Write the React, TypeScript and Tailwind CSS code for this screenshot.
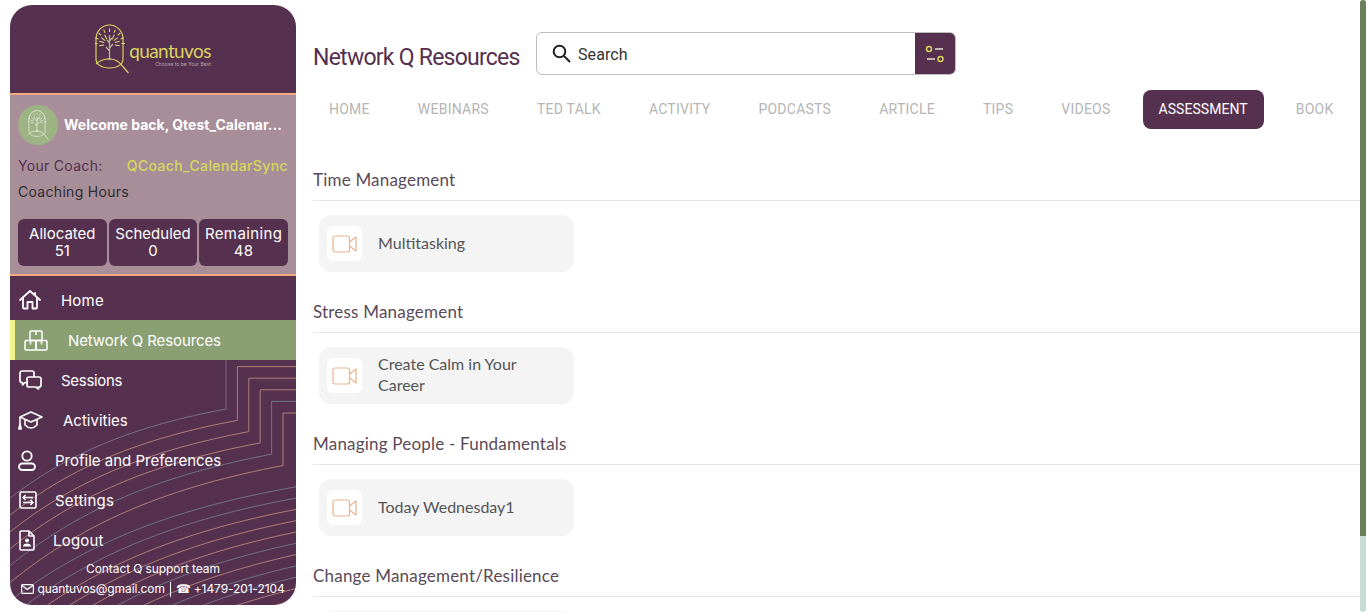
const tabs = ["HOME", "WEBINARS", "TED TALK", "ACTIVITY", "PODCASTS", "ARTICLE", "TIPS", "VIDEOS", "ASSESSMENT", "BOOK"];

const sections = [
  { title: "Time Management", item: "Multitasking" },
  { title: "Stress Management", item: "Create Calm in Your Career" },
  { title: "Managing People - Fundamentals", item: "Today Wednesday1" },
  { title: "Change Management/Resilience", item: "" },
];

function TreeLogo({ className, color, ray, trunk }: { className: string; color: string; ray: string; trunk: string }) {
  const inner = [-75, -52, -28, 28, 52, 75, -100, 100];
  const outer = [-88, -66, -44, -22, 0, 22, 44, 66, 88];
  return (
    <svg viewBox="0 0 34 50" className={className} fill="none" stroke={color} strokeWidth="1.2">
      <path d="M1 15a13.500 14 0 0 1 27 0v20c0 5-5 9-13.500 9S1 40 1 35Z" />
      <path d="M1 40c3-3 8-5 13.500-5 5 0 9 2 12 6l7 8" />
      <path d="M14.500 35V11M14.500 27l-3.500-4M14.500 24l3.500-4M14.500 19l-2.500-3M14.500 17l2.500-3M12.500 35h4" stroke={trunk} strokeWidth="1.3" />
      {inner.map((r) => (
        <path key={r} d="M14.500 14.500V9.500" stroke={ray} strokeWidth="1" transform={`rotate(${r} 14.500 20)`} />
      ))}
      {outer.map((r) => (
        <path key={r} d="M14.500 8V4.500" stroke={ray} strokeWidth="1" transform={`rotate(${r} 14.500 20)`} />
      ))}
    </svg>
  );
}

// decorative contour lines behind the lower part of the sidebar
function SidebarLines() {
  const colors = ["#77708a", "#b07f78", "#b07f78", "#b07f78", "#6f7488", "#b07f78", "#6f7488"];
  const paths: { d: string; c: string }[] = [];
  for (let i = 0; i < 20; i++) {
    const x = 226 + i * 11.4;
    const yb = 409 + i * 11.3;
    const stepped = i < 6;
    const head = i === 0 ? `M226 360V${yb}` : stepped ? `M296 ${355 + i * 11.6}H${x}V${yb}` : `M296 ${yb + 10}`;
    const fromX = stepped ? x : 296;
    const fromY = stepped ? yb : yb + 10;
    const endY = 515 + i * 17;
    const c1x = fromX - (fromX + 10) * 0.36;
    const c1y = fromY + (endY - fromY) * 0.15;
    const c2x = fromX - (fromX + 10) * 0.7;
    const c2y = fromY + (endY - fromY) * 0.4;
    paths.push({ d: `${head}C${c1x} ${c1y} ${c2x} ${c2y} -10 ${endY}`, c: colors[i % colors.length] });
  }
  return (
    <svg className="absolute left-0 top-0 w-full h-full pointer-events-none" viewBox="10 276 286 329" preserveAspectRatio="none" fill="none">
      {paths.map((p, i) => (
        <path key={i} d={p.d} stroke={p.c} strokeWidth="1" />
      ))}
    </svg>
  );
}

function HomeIcon() {
  return (
    <svg width="22" height="20" viewBox="0 0 22 20" fill="none" stroke="white" strokeWidth="1.8" strokeLinejoin="round" strokeLinecap="round">
      <path d="M1 10 11 1l10 9" />
      <path d="M16 3v2" />
      <path d="M4 8v9.500a1 1 0 0 0 1 1h3.500V12h5v6.500H17a1 1 0 0 0 1-1V8" />
    </svg>
  );
}

function NetworkIcon() {
  return (
    <svg width="24" height="21" viewBox="0 0 24 21" fill="none" stroke="white" strokeWidth="1.5" strokeLinejoin="round">
      <rect x="6" y="1" width="12" height="9.500" rx="1" />
      <rect x="1" y="10.500" width="11" height="9.500" rx="1" />
      <rect x="12" y="10.500" width="11" height="9.500" rx="1" />
      <path d="M12 1v4M6.500 10.500v4M17.500 10.500v4" />
    </svg>
  );
}

function SessionsIcon() {
  return (
    <svg width="23" height="20" viewBox="0 0 23 20" fill="none" stroke="white" strokeWidth="1.7" strokeLinejoin="round">
      <path d="M9 12.500H6l-2.500 2.500v-2.500H3a2 2 0 0 1-2-2V3a2 2 0 0 1 2-2h10a2 2 0 0 1 2 2v4" />
      <path d="M10 7h10a2 2 0 0 1 2 2v6a2 2 0 0 1-2 2h-.5v2L17 17h-7a2 2 0 0 1-2-2V9a2 2 0 0 1 2-2Z" />
    </svg>
  );
}

function CapIcon() {
  return (
    <svg width="25" height="19" viewBox="0 0 25 19" fill="none" stroke="white" strokeWidth="1.6" strokeLinejoin="round">
      <path d="M13 1 24 6l-11 5L2 6Z" />
      <path d="M7 9v5c2 2 4 3 6 3s4-1 6-3V9" />
      <path d="M2 6v7" />
      <path d="M.8 18l1.200-5 1.200 5Z" fill="white" />
    </svg>
  );
}

function PersonIcon() {
  return (
    <svg width="18" height="21" viewBox="0 0 18 21" fill="none" stroke="white" strokeWidth="1.8">
      <circle cx="9" cy="6" r="4.700" />
      <rect x="1" y="13.500" width="16" height="6.500" rx="3.250" />
    </svg>
  );
}

function SettingsIcon() {
  return (
    <svg width="18" height="18" viewBox="0 0 18 18" fill="none" stroke="white" strokeWidth="1.6">
      <rect x="1" y="1" width="16" height="16" rx="1.500" />
      <path d="M4 6.500h10M6.500 4l-2.500 2.500L6.500 9M4 11.500h10M11.500 9l2.500 2.500L11.500 14" strokeWidth="1.400" />
    </svg>
  );
}

function LogoutIcon() {
  return (
    <svg width="16" height="21" viewBox="0 0 16 21" fill="none" stroke="white" strokeWidth="1.6" strokeLinejoin="round">
      <path d="M1 2a1 1 0 0 1 1-1h8l5 5v13a1 1 0 0 1-1 1H2a1 1 0 0 1-1-1Z" />
      <path d="M10 1v5h5" />
      <circle cx="8" cy="10.500" r="2" fill="white" stroke="none" />
      <path d="M4 16.500c0-2 1.800-3 4-3s4 1 4 3Z" fill="white" stroke="none" />
    </svg>
  );
}

function VideoIcon() {
  return (
    <svg width="25" height="18" viewBox="0 0 25 18" fill="none" stroke="#eeb38a" strokeWidth="1.200" strokeLinejoin="round">
      <rect x="1" y="1" width="16.500" height="16" rx="2" />
      <path d="M17.500 7 24 2v14l-6.500-5" />
    </svg>
  );
}

function SearchIcon() {
  return (
    <svg width="19" height="19" viewBox="0 0 19 19" fill="none" stroke="#222" strokeWidth="2">
      <circle cx="7.500" cy="7.500" r="5.800" />
      <path d="m12 12 6 6" />
    </svg>
  );
}

function NavItem({ icon, label, iconClass, textClass }: { icon: React.ReactNode; label: string; iconClass: string; textClass: string }) {
  return (
    <div className="flex items-center h-10 text-white text-[15px]">
      <div className={`flex shrink-0 ${iconClass}`}>{icon}</div>
      <span className={`mt-[2px] ${textClass}`}>{label}</span>
    </div>
  );
}

export default function App() {
  return (
    <div className="flex h-[612px] w-[1366px] overflow-hidden bg-white font-['Inter',sans-serif]">
      {/* Sidebar */}
      <aside className="relative w-[286px] h-[600px] mt-[5px] ml-[10px] mr-[17px] shrink-0 rounded-[22px] overflow-hidden bg-[#55304f]">
        <div className="h-[88px] flex items-center justify-center border-b-2 border-[#f2a97c] box-content">
          <div className="flex items-end">
            <TreeLogo className="w-[34px] h-[50px]" color="#d9d35f" ray="#e3dc7a" trunk="#b9b58c" />
            <div className="mb-[7px]">
              <div className="text-[19px] leading-[23px] tracking-[-0.6px] text-[#d9d35f] font-['Lato',sans-serif]">quantuvos</div>
              <div className="text-[5px] leading-[5px] text-right text-[#b8a7a5]">Choose to be Your Best</div>
            </div>
          </div>
        </div>

        <div className="h-[179px] bg-[#a88e98] border-b-2 border-[#f2a97c] box-content px-2">
          <div className="flex items-center pt-[10px]">
            <div className="w-10 h-10 rounded-full bg-[#9db384] flex items-center justify-center shrink-0">
              <TreeLogo className="w-[21px] h-[30px]" color="#e8efe0" ray="#e8efe0" trunk="#e8efe0" />
            </div>
            <div className="ml-[6px] -mt-[2px] text-[14px] font-bold text-white truncate">Welcome back, Qtest_Calenar...</div>
          </div>
          <div className="flex justify-between mt-[11px] text-[14px] leading-5">
            <span className="text-[#55304f] tracking-[0.3px]">Your Coach:</span>
            <span className="text-[#d5d85a] font-medium tracking-[0.38px]">QCoach_CalendarSync</span>
          </div>
          <div className="mt-[6px] text-[14px] leading-5 tracking-[0.3px] text-[#2c2c33]">Coaching Hours</div>
          <div className="grid grid-cols-3 gap-[2px] mt-[17px] text-white text-[15px] leading-[17px] text-center">
            <div className="h-[47px] rounded-md bg-[#55304f] pt-[6px]">Allocated<br />51</div>
            <div className="h-[47px] rounded-md bg-[#55304f] pt-[6px]">Scheduled<br />0</div>
            <div className="h-[47px] rounded-md bg-[#55304f] pt-[6px] tracking-[0.4px]">Remaining<br />48</div>
          </div>
        </div>

        <div className="relative h-[329px]">
          <SidebarLines />
          <div className="relative pt-[4px]">
            <NavItem icon={<HomeIcon />} label="Home" iconClass="w-[22px] ml-[9px]" textClass="ml-[20px] tracking-[0.2px]" />
            <div className="flex items-center h-10 bg-[#8ba072] border-l-[5px] border-[#f6f38c] text-white text-[15px]">
              <div className="ml-[9px] flex"><NetworkIcon /></div>
              <span className="ml-[20px] mt-[2px] tracking-[-0.1px]">Network Q Resources</span>
            </div>
            <NavItem icon={<SessionsIcon />} label="Sessions" iconClass="w-[23px] ml-[9px]" textClass="ml-[19px] tracking-[-0.3px]" />
            <NavItem icon={<CapIcon />} label="Activities" iconClass="w-[25px] ml-[8px]" textClass="ml-[20px]" />
            <NavItem icon={<PersonIcon />} label="Profile and Preferences" iconClass="w-[18px] ml-[8px]" textClass="ml-[19px]" />
            <NavItem icon={<SettingsIcon />} label="Settings" iconClass="w-[18px] ml-[9px]" textClass="ml-[18px] tracking-[0.2px]" />
            <NavItem icon={<LogoutIcon />} label="Logout" iconClass="w-[16px] ml-[9px]" textClass="ml-[18px] tracking-[0.2px]" />
          </div>
          <div className="relative text-center text-white text-[12px] leading-4 mt-[1px] tracking-[-0.1px]">Contact Q support team</div>
          <div className="relative flex items-center justify-center text-white text-[12px] leading-4 mt-[4px] tracking-[-0.1px]">
            <svg width="13" height="10" viewBox="0 0 13 10" fill="none" stroke="white" strokeWidth="1.200" className="mr-[3px]">
              <rect x="0.600" y="0.600" width="11.800" height="8.800" rx="1" />
              <path d="m1 1.500 5.500 4 5.500-4" />
            </svg>
            <span>quantuvos@gmail.com</span>
            <span className="w-px h-[15px] bg-white mx-[5px]" />
            <span className="mr-[3px]">☎</span>
            <span>+1479-201-2104</span>
          </div>
        </div>
      </aside>

      {/* Main */}
      <main className="flex-1 min-w-0 overflow-hidden">
        <div className="flex items-center h-[43px] mt-[32px]">
          <h1 className="w-[223px] shrink-0 pt-[9px] text-[23px] tracking-[-0.75px] text-[#55304f] font-['Roboto',sans-serif]">Network Q Resources</h1>
          <div className="flex w-[420px] h-[43px] border border-[#bdbdbd] rounded-md overflow-hidden">
            <div className="flex flex-1 items-center pl-[15px] text-[#333] text-[16px] font-['Roboto',sans-serif]">
              <SearchIcon />
              <span className="ml-[7px] mt-[3px] tracking-[0.1px]">Search</span>
            </div>
            <div className="w-[40px] bg-[#55304f] flex items-center justify-center">
              <svg width="20" height="18" viewBox="0 0 20 18" fill="none" stroke="#d9d35f" strokeWidth="1.500">
                <circle cx="4" cy="4" r="2.500" />
                <circle cx="15.500" cy="14" r="2.500" />
                <path d="M10 4h8M2 14h8" stroke="#e8e2d8" />
              </svg>
            </div>
          </div>
        </div>

        <div className="flex gap-4 mt-[15px] font-['Roboto',sans-serif] text-[14px] tracking-[0.25px]">
          {tabs.map((t) => (
            <div
              key={t}
              className={`h-[39px] flex items-center px-4 rounded-lg ${t === "ASSESSMENT" ? "bg-[#55304f] text-white tracking-[0.05px]" : "text-[#b5b5b5]"}`}
            >
              {t}
            </div>
          ))}
        </div>

        <div className="mt-[31px]">
          {sections.map((s) => (
            <section key={s.title} className="h-[132px]">
              <h2 className="h-[41px] flex items-center border-b border-[#e5e5e5] text-[17px] tracking-[0.2px] text-[#5b4a58] font-['Lato',sans-serif]">{s.title}</h2>
              <div className="flex items-center w-[255px] min-h-[57px] mt-[14px] ml-[6px] px-2 py-2 rounded-xl bg-[#f4f4f4]">
                <div className="w-[35px] h-[35px] shrink-0 rounded-md bg-white flex items-center justify-center">
                  <VideoIcon />
                </div>
                <span className="ml-[16px] -mt-[3px] max-w-[150px] text-[16px] leading-[21px] text-[#555] font-['Lato',sans-serif]">{s.item}</span>
              </div>
            </section>
          ))}
        </div>
      </main>

      {/* Scrollbar */}
      <div className="w-[6px] shrink-0 rounded-full bg-[#c8dcd6]">
        <div className="h-[536px] rounded-b-sm rounded-t-full bg-[#6b7f5a]" />
      </div>
    </div>
  );
}
